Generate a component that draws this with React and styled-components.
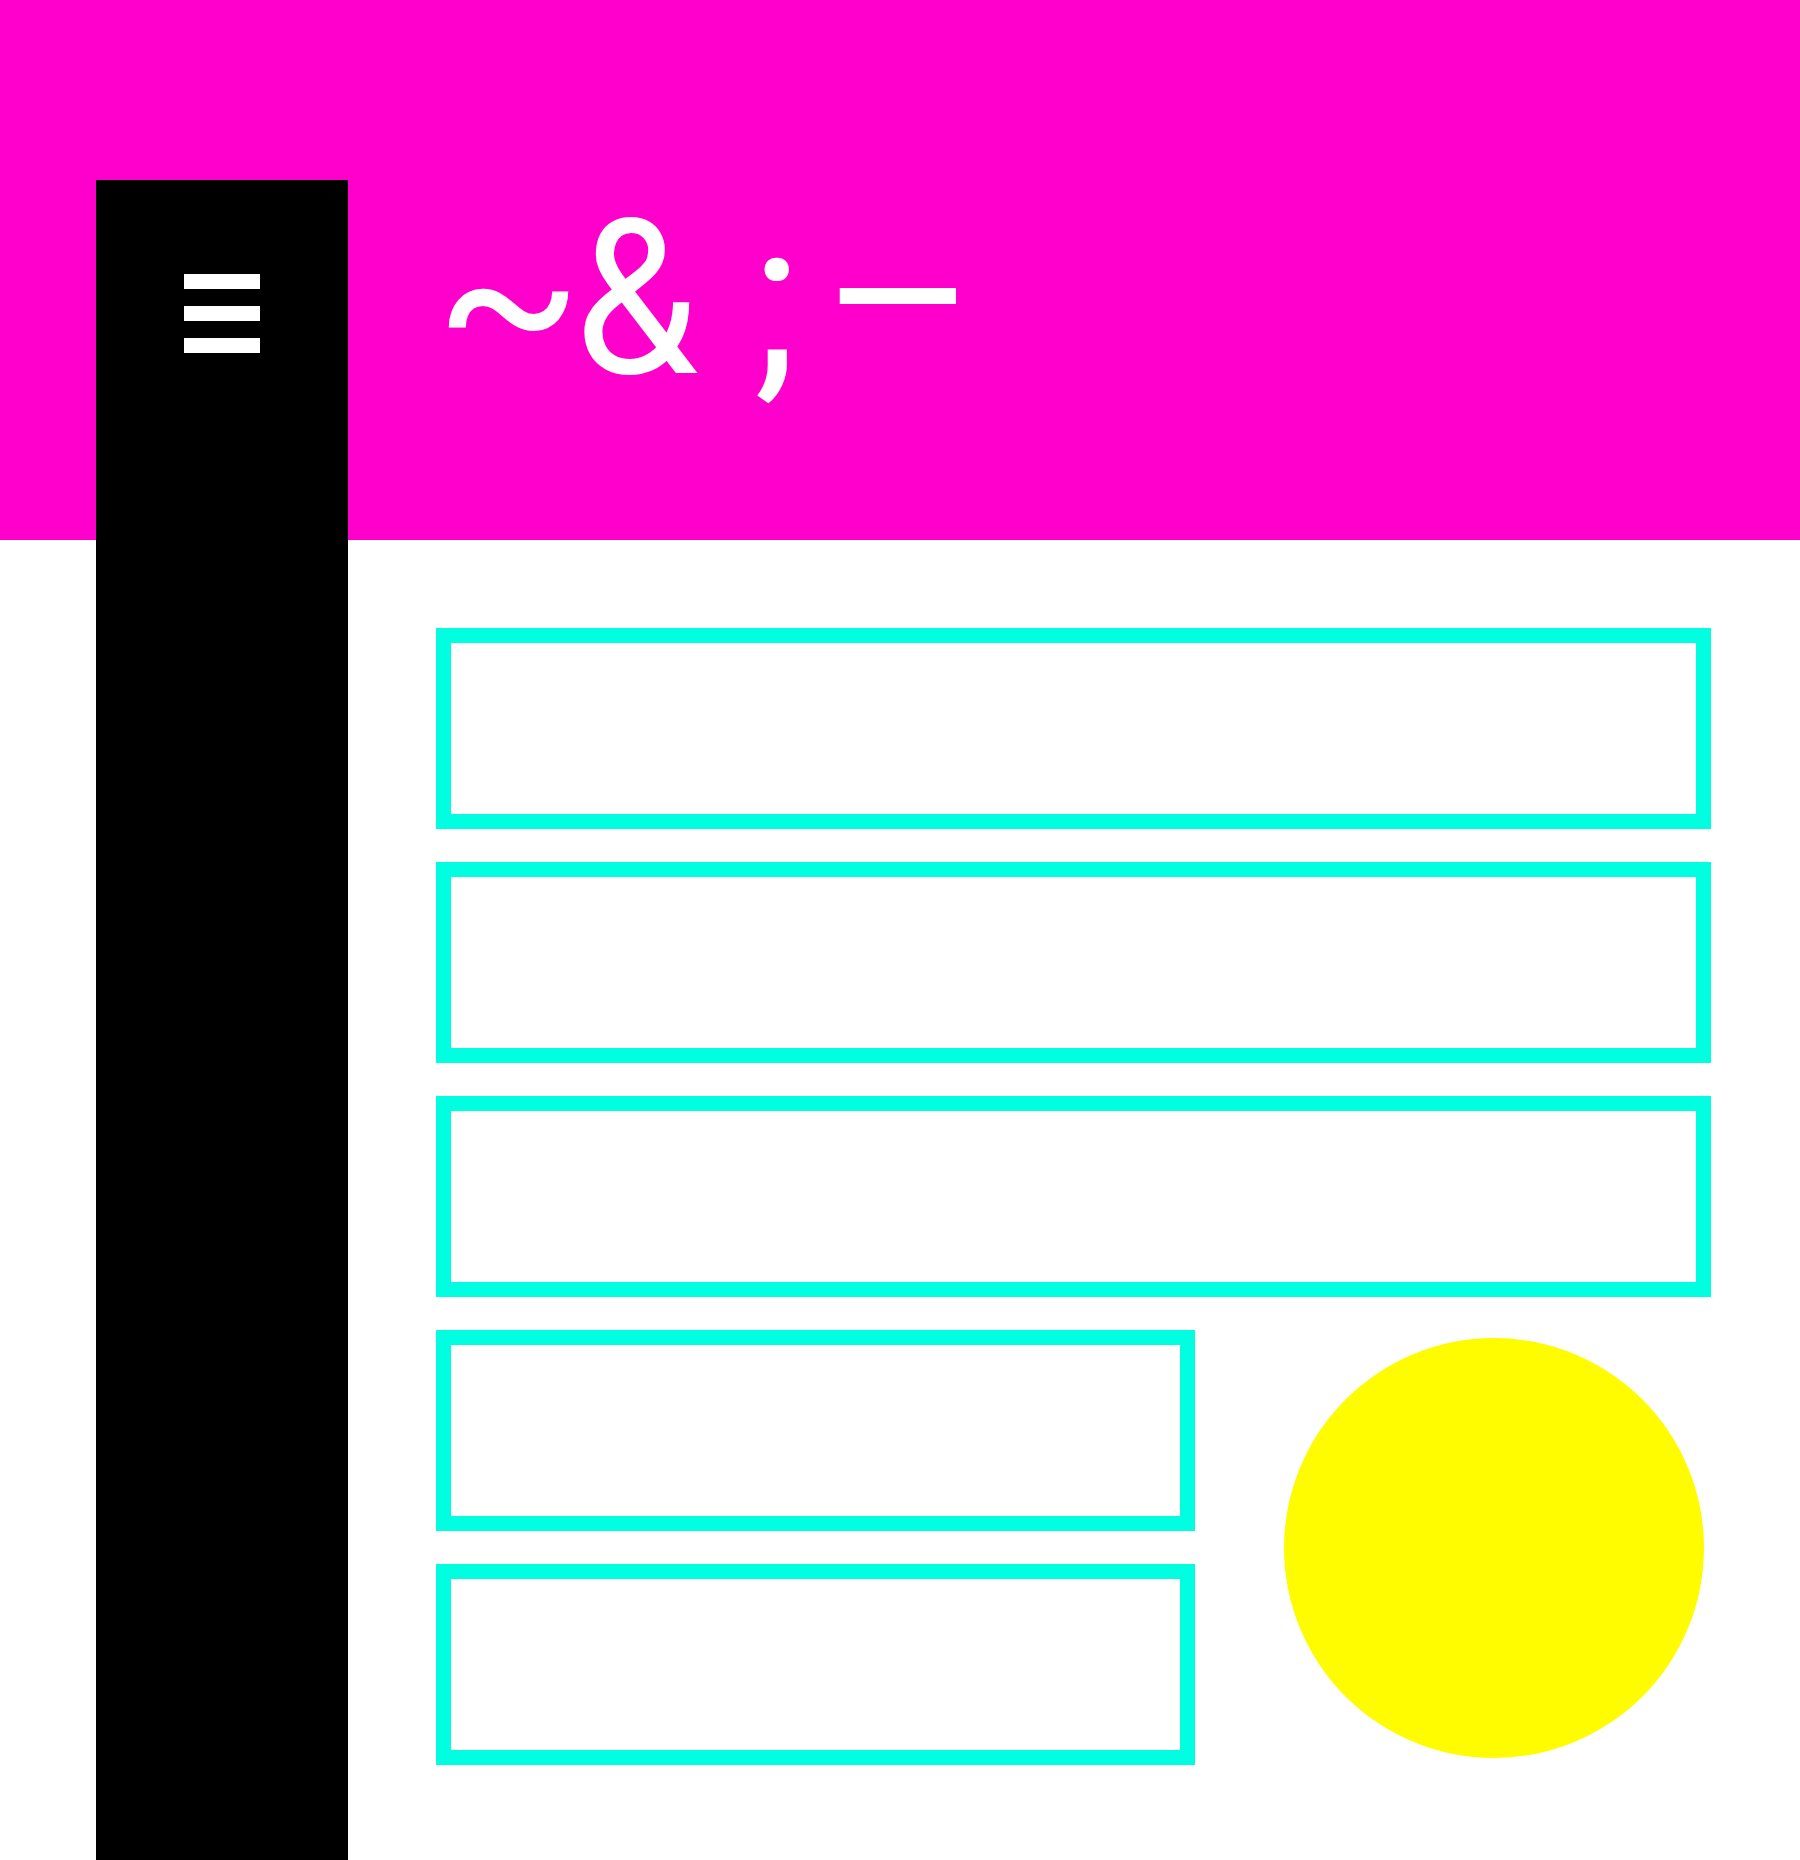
import React from "react";
import styled, { createGlobalStyle } from "styled-components";

const GlobalStyle = createGlobalStyle`
  html, body {
    margin: 0;
    padding: 0;
    background: #ffffff;
  }
  body {
    font-family: Roboto, "Noto Sans", sans-serif;
  }
`;

const Page = styled.div`
  display: grid;
  grid-template-columns: 96px 252px 1fr;
  grid-template-rows: 180px 360px 1fr;
  min-height: 100vh;
`;

const HeaderBand = styled.header`
  grid-column: 1 / -1;
  grid-row: 1 / 3;
  background: #ff00cc;
`;

const Sidebar = styled.nav`
  grid-column: 2;
  grid-row: 2 / 4;
  background: #000000;
  display: flex;
  justify-content: center;
  padding-top: 94px;
`;

const Burger = styled.button`
  display: flex;
  flex-direction: column;
  gap: 17px;
  width: 76px;
  height: fit-content;
  padding: 0;
  border: none;
  background: transparent;
  cursor: pointer;
`;

const BurgerBar = styled.span`
  display: block;
  height: 15px;
  background: #ffffff;
`;

const Title = styled.h1`
  grid-column: 3;
  grid-row: 2;
  align-self: start;
  margin: 12px 0 0;
  padding-left: 87px;
  color: #ffffff;
  font-family: Roboto, sans-serif;
  font-weight: 400;
  font-size: 216px;
  line-height: 1;
  white-space: pre;
`;

const Glyph = styled.span`
  display: inline-block;
  margin-left: ${(p) => p.$shift || 0}px;
  transform: scaleX(${(p) => p.$squeeze || 1});
`;

const Main = styled.main`
  grid-column: 3;
  grid-row: 3;
  padding: 88px 89px 88px 88px;
  display: flex;
  flex-direction: column;
  gap: 33px;
`;

const Panel = styled.div`
  box-sizing: border-box;
  height: 201px;
  width: ${(p) => (p.$narrow ? "759px" : "100%")};
  border: 15px solid #00ffe1;
`;

const SplitRow = styled.div`
  display: flex;
  align-items: center;
`;

const Stack = styled.div`
  display: flex;
  flex-direction: column;
  gap: 33px;
`;

const Badge = styled.div`
  margin-left: auto;
  margin-right: 7px;
  width: 420px;
  height: 420px;
  border-radius: 50%;
  background: #fffc00;
`;

export default function App() {
  return (
    <>
      <GlobalStyle />
      <Page>
        <HeaderBand />
        <Sidebar>
          <Burger aria-label="Menu">
            <BurgerBar />
            <BurgerBar />
            <BurgerBar />
          </Burger>
        </Sidebar>
        <Title>
          <Glyph>~</Glyph>
          <Glyph $shift={-13} $squeeze={0.92}>&amp;</Glyph>
          <Glyph $shift={-4}>{" ;"}</Glyph>
          <Glyph $shift={29} $squeeze={1.1}>–</Glyph>
        </Title>
        <Main>
          <Panel />
          <Panel />
          <Panel />
          <SplitRow>
            <Stack>
              <Panel $narrow />
              <Panel $narrow />
            </Stack>
            <Badge />
          </SplitRow>
        </Main>
      </Page>
    </>
  );
}
